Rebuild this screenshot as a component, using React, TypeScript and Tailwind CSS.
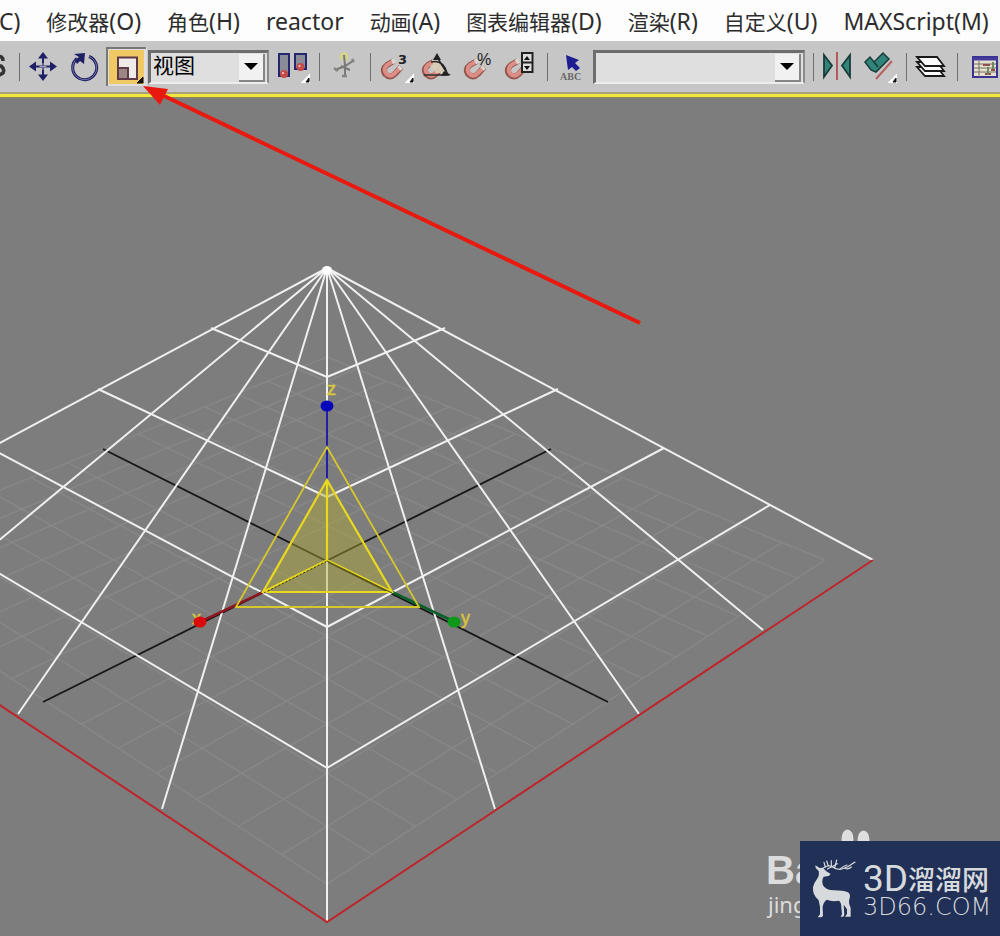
import type { ReactNode } from "react";

const NAVY = "#1f1f66";

/* Perspective projection of a ground-plane point, u and v in -1..1 */
function project(u: number, v: number): [number, number] {
  const depth = (u + v) / 2;
  const side = (u - v) / 2;
  const w = 1 - 0.2296 * depth;
  return [327 + (498 * side) / w, (560 + 121 * depth) / w];
}

function segment(a: [number, number], b: [number, number]) {
  return `M${a[0].toFixed(1)} ${a[1].toFixed(1)}L${b[0].toFixed(1)} ${b[1].toFixed(1)}`;
}

const STEPS = [-7, -6, -5, -4, -3, -2, -1, 1, 2, 3, 4, 5, 6, 7].map((n) => n / 7);
const groundGrid = STEPS.map(
  (k) => segment(project(k, -1), project(k, 1)) + segment(project(-1, k), project(1, k)),
).join("");

const RIM = [
  [873, 560], [763, 630], [639, 714], [495, 809], [327, 922],
  [162, 809], [18, 714], [-109, 630], [-219, 560],
];
const spokes = RIM.map(([x, y]) => `M327 268L${x} ${y}`).join("");
const rings =
  "M445 328L327 377L211 328M558 389L327 497L98 389M664 448L327 627L-10 448M770 505L327 768L-116 505";

function Tool({ name, x, active, children }: { name: string; x: number; active?: boolean; children: ReactNode }) {
  return (
    <button type="button" aria-label={name} aria-pressed={active} className="block h-[51px] w-[42px] shrink-0">
      <svg viewBox={`${x} 41 42 51`} className="block h-[51px] w-[42px]" fill="none">
        {children}
      </svg>
    </button>
  );
}

function Divider() {
  return <div className="mr-0.5 ml-1.5 h-7 w-px shrink-0 bg-[#6f6f6f]" />;
}

function Flyout({ x, y }: { x: number; y: number }) {
  return (
    <>
      <path d={`M${x - 6} ${y}L${x} ${y - 6}V${y}Z`} fill="#fff" stroke="#fff" strokeWidth="2" />
      <path d={`M${x - 3} ${y}L${x} ${y - 4}V${y}Z`} fill="#111" stroke="#111" />
    </>
  );
}

function Magnet({ x }: { x: number }) {
  return (
    <g transform={`translate(${x} 0)`}>
      <path d="M14 61L7 65Q2 69 5 74Q10 79 15 74L21 67" stroke="#93564f" strokeWidth="6" />
      <path d="M13 61.500L7 65Q3 69 6 73.500Q10 77.500 14 74L20 68" stroke="#dc8d85" strokeWidth="4" />
      <path d="M12 62L15 60.500M19 69L21 67" stroke="#d9d5d0" strokeWidth="5" />
    </g>
  );
}

function DropDown({ label, options, width }: { label: string; options: string[]; width: string }) {
  return (
    <div className={`relative h-[34px] shrink-0 ${width}`}>
      <select
        aria-label={label}
        className="block h-full w-full appearance-none border-t-[3px] border-r-2 border-b-2 border-l-[3px] border-t-[#6d6d6d] border-r-[#8b8b8b] border-b-[#ededed] border-l-[#6d6d6d] bg-[#dfdfdf] pb-1.5 pl-0.5 font-['Noto_Sans_CJK_SC',sans-serif] text-[21px] leading-[23px] text-black outline-none"
      >
        {options.map((o) => (
          <option key={o}>{o}</option>
        ))}
      </select>
      <span className="pointer-events-none absolute top-1 right-1 flex h-7 w-[26px] items-center justify-center border-r-2 border-b-2 border-[#858585] bg-[#f1f1f1]">
        <svg viewBox="0 0 14 7" className="h-[7px] w-[14px]">
          <path d="M0 0H14L7 7Z" fill="#000" />
        </svg>
      </span>
    </div>
  );
}

const MENUS: [string, string][] = [
  ["", "(C)"],
  ["修改器", "(O)"],
  ["角色", "(H)"],
  ["", "reactor"],
  ["动画", "(A)"],
  ["图表编辑器", "(D)"],
  ["渲染", "(R)"],
  ["自定义", "(U)"],
  ["", "MAXScript(M)"],
];

function MenuBar() {
  return (
    <nav className="flex h-[41px] items-center gap-[26px] overflow-hidden bg-[#fdfdfd]">
      {MENUS.map(([cjk, latin], i) => (
        <button
          key={latin}
          type="button"
          className={`flex shrink-0 items-center leading-7 whitespace-nowrap text-[#2c2c2c] ${i === 0 ? "-ml-2" : ""}`}
        >
          {cjk && <span className="font-['Noto_Sans_CJK_SC',sans-serif] text-[21px]">{cjk}</span>}
          <span className="font-['Noto_Sans',sans-serif] text-[23px]">{latin}</span>
        </button>
      ))}
    </nav>
  );
}

function Toolbar() {
  return (
    <div className="flex h-[51px] items-center overflow-hidden bg-[#c6c6c6]">
      <button type="button" aria-label="绑定" className="h-[51px] w-[13px] shrink-0">
        <svg viewBox="0 41 13 51" className="block h-[51px] w-[13px]" fill="none">
          <path d="M-3 57Q3 55 3 61M-2 66H1Q5 69 3 73L-2 76" stroke="#333" strokeWidth="3.500" />
        </svg>
      </button>
      <Divider />
      <Tool name="移动" x={22}>
        <path d="M43 56V77M32 66.500H54" stroke={NAVY} strokeWidth="2" />
        <path d="M43 52L38 58.500H48ZM43 81L38 74.500H48ZM29 66.500L36 61.500V71.500ZM57 66.500L50 61.500V71.500Z" fill={NAVY} />
        <path d="M43 63V70M39.500 66.500H46.500" stroke="#a5a5b8" strokeWidth="1" />
      </Tool>
      <Tool name="旋转" x={64}>
        <path d="M89 56.500A12 12 0 1 1 77 58.500" stroke={NAVY} strokeWidth="3" />
        <path d="M89 56.500A12 12 0 1 1 77 58.500" stroke="#8c8cad" strokeWidth="0.800" />
        <path d="M74 54L85 53L84 64L80 61L77 64L75 60L79 57Z" fill={NAVY} />
      </Tool>
      <Tool name="缩放" x={106} active>
        <path d="M106 47H147V86H106Z" fill="#dedede" />
        <path d="M107 86V48H146" stroke="#777" strokeWidth="2" />
        <path d="M109 50H144V84H109Z" fill="#f0c964" />
        <path d="M118 57.500H137V79H118Z" fill="#efebe8" stroke="#5e3946" strokeWidth="2" />
        <path d="M118 68H128V79H118Z" fill="#9c8585" stroke="#5e3946" strokeWidth="2" />
        <path d="M137 83L143 77V83Z" fill="#111" stroke="#111" />
      </Tool>
      <DropDown label="参考坐标系" options={["视图", "屏幕", "世界"]} width="w-[121px]" />
      <div className="w-0.5 shrink-0" />
      <Tool name="使用轴点中心" x={271}>
        <path d="M279 54H289V76H279ZM295 54H306V69H295Z" fill="#8a8d98" stroke="#252570" strokeWidth="2" />
        <circle cx="284" cy="74" r="4" fill="#c44a48" />
        <circle cx="300.500" cy="67" r="4" fill="#c44a48" />
        <circle cx="283" cy="73" r="1.200" fill="#eab0aa" />
        <circle cx="299.500" cy="66" r="1.200" fill="#eab0aa" />
        <Flyout x={309} y={82} />
      </Tool>
      <Divider />
      <Tool name="选择并操纵" x={322}>
        <circle cx="344" cy="56.500" r="4.500" fill="#d3d492" />
        <path d="M335 70L345 66L353 61M344 55L345 66V76M341 66L350 70" stroke="#777a76" strokeWidth="2" />
        <path d="M334 68L338 71M352 59L354 62M342 76H347" stroke="#85857f" strokeWidth="2.500" />
      </Tool>
      <Divider />
      <Tool name="三维捕捉" x={373}>
        <Magnet x={380} />
        <text x="398" y="64" fontSize="13" fontWeight="700" fill="#222" fontFamily="DejaVu Sans, sans-serif">3</text>
        <Flyout x={413} y={82} />
      </Tool>
      <Tool name="角度捕捉" x={415}>
        <Magnet x={421} />
        <path d="M437 57L448 75H424" stroke="#2c2c2c" strokeWidth="1.500" />
        <path d="M437 60L446 73H436L430 66Z" fill="#d8cdb7" fillOpacity="0.900" />
        <path d="M433 60L437 53L441 60ZM444 71L451 75L441 76Z" fill="#222" />
        <path d="M431 62Q443 59 447 73" stroke="#222" strokeWidth="1.500" />
      </Tool>
      <Tool name="百分比捕捉" x={457}>
        <Magnet x={463} />
        <text x="477" y="65" fontSize="16" fill="#222" fontFamily="Liberation Sans, sans-serif">%</text>
      </Tool>
      <Tool name="微调器捕捉" x={499}>
        <Magnet x={504} />
        <path d="M522 53H532.500V72H522ZM522 62.500H532" fill="#ddd" stroke="#222" strokeWidth="2" />
        <path d="M524 60L527 56L530 60ZM524 66H530L527 70Z" fill="#111" />
      </Tool>
      <Divider />
      <Tool name="命名选择集" x={550}>
        <path d="M566 55L579 60L575 63L580 68L576 71L572 67L568 70Z" fill="#1d1d91" />
        <text x="560" y="80" fontSize="10" fontWeight="700" fill="#686868" fontFamily="Liberation Serif, serif">ABC</text>
      </Tool>
      <div className="w-px shrink-0" />
      <DropDown label="选择集" options={[""]} width="w-[212px]" />
      <div className="w-0.5 shrink-0" />
      <Divider />
      <Tool name="镜像" x={816}>
        <path d="M824 55L832 65.500L824 77ZM850 55L842 65.500L850 77Z" fill="#338579" stroke="#183c3a" strokeWidth="1.800" />
        <path d="M837 52V80" stroke="#b05a5a" strokeWidth="2" />
      </Tool>
      <Tool name="对齐" x={858}>
        <path d="M865 62L870 57L874 62L883 53L889 59L876 72L871 70Z" fill="#32837a" stroke="#183c3a" strokeWidth="1.500" />
        <path d="M874 62L878 67" stroke="#183c3a" strokeWidth="1.500" />
        <path d="M876 79L892 61" stroke="#b76060" strokeWidth="2" />
        <Flyout x={896} y={82} />
      </Tool>
      <Divider />
      <Tool name="层管理器" x={909}>
        {[10, 5, 0].map((dy) => (
          <path key={dy} d={`M917 ${57 + dy}H937L944 ${66 + dy}H925Z`} fill="#fafafa" stroke="#191919" strokeWidth="1.800" />
        ))}
      </Tool>
      <Divider />
      <Tool name="曲线编辑器" x={960}>
        <path d="M973 57H997V77H973Z" fill="#e6e0cf" stroke="#3a3193" strokeWidth="2" />
        <path d="M973 59H998" stroke="#453b9c" strokeWidth="3" />
        <path d="M974 64H996M974 68H996M974 72H996M979 61V77" stroke="#777064" />
        <path d="M983 65H990M991 70H995M985 74H991" stroke="#924f4b" strokeWidth="2" />
        <path d="M988 67V75M993 62V69" stroke="#6c8a62" strokeWidth="2" />
      </Tool>
    </div>
  );
}

function Scene() {
  return (
    <svg viewBox="0 98 1000 838" className="block w-full" fill="none" role="img" aria-label="透视视口">
      <path d={groundGrid} stroke="#878787" strokeWidth="1.500" />
      <path d="M103 449L608 702M551 449L43 702" stroke="#161616" strokeWidth="1.800" />
      <path d={spokes + rings} stroke="#f0f0f0" strokeWidth="2" strokeLinejoin="round" />
      <ellipse cx="327" cy="270" rx="5" ry="4" fill="#fff" />
      <path d="M873 560L327 922L-219 560" stroke="#bd252b" strokeWidth="2" />
      <path d="M327 480L392 592H263Z" fill="#b3a936" fillOpacity="0.460" />
      <path d="M327 406V480" stroke="#2020a5" strokeWidth="2" />
      <path d="M263 592L200 622" stroke="#8d1720" strokeWidth="2.500" />
      <path d="M392 592L455 622" stroke="#0c602a" strokeWidth="3" />
      <path d="M327 447L419 607H236Z" stroke="#d6c72b" strokeWidth="1.800" />
      <path d="M327 480L392 592H263ZM327 480V560" stroke="#e8d81f" strokeWidth="2.200" />
      <path d="M263 592L327 560L392 592" stroke="#e8d81f" strokeWidth="2" />
      <path d="M264 593L327 561" stroke="#3a3716" strokeDasharray="2 2" />
      <path d="M327 561L392 593" stroke="#4b4715" />
      <ellipse cx="327" cy="406" rx="6.500" ry="5.500" fill="#0606bd" />
      <g fill="#d8c63b" stroke="#d8c63b" strokeWidth="0.500" fontFamily="Liberation Sans, sans-serif" fontSize="18">
        <text x="327" y="395">z</text>
        <text x="192" y="624">x</text>
        <text x="461" y="624">y</text>
      </g>
      <ellipse cx="200" cy="622" rx="6.500" ry="5.500" fill="#dc0b0b" />
      <ellipse cx="454" cy="622" rx="6.500" ry="5.500" fill="#0e9819" />
    </svg>
  );
}

function Deer() {
  return (
    <svg viewBox="180 123 186 285" className="h-[95px] w-[62px] shrink-0" fill="none">
      <path
        d="M226 196L239 204L249 203L258 213L272 222L266 228L251 230Q244 242 249 256Q257 271 282 271Q310 271 322 276Q333 281 329 295Q324 306 332 324V350H315L321 342V328L311 314L313 344L310 350H302L306 342L303 312Q301 304 297 302Q276 306 260 299Q248 309 248 323L249 348L244 352H233L240 343V321L236 301Q217 285 219 262Q222 248 231 237Q239 227 236 213L227 204Z"
        fill="#d7dadd"
      />
      <path
        d="M248 205Q258 196 272 198Q290 211 306 207Q327 200 345 186M256 202L252 187M265 198L260 183M274 199L274 182M284 204L290 180M298 208Q310 198 321 195M314 205Q324 210 334 201M262 207Q278 199 292 191"
        stroke="#d7dadd"
        strokeWidth="3.500"
        strokeLinecap="round"
      />
    </svg>
  );
}

function Watermark() {
  return (
    <div className="absolute right-0 bottom-0 h-[108px] w-[236px] overflow-hidden text-[#dcdcdc]">
      <svg viewBox="0 0 40 20" className="absolute top-0 left-[76px] h-5 w-10">
        <ellipse cx="7.500" cy="11" rx="6" ry="9.500" fill="#dedede" />
        <ellipse cx="23.500" cy="12" rx="6" ry="9.500" fill="#dedede" />
      </svg>
      <div className="pt-[22px] pl-0.5 font-['Liberation_Sans',sans-serif] text-[40px] leading-10 font-bold">Bai</div>
      <div className="pl-1 font-['Noto_Sans',sans-serif] text-[22px] leading-7">jing</div>
      <div className="absolute right-0 bottom-0 flex h-[95px] w-[200px] bg-[#213056] text-[#d7dadd]">
        <Deer />
        <div className="pt-5 pl-px whitespace-nowrap">
          <div className="flex h-9 items-center">
            <span className="font-['Roboto',sans-serif] text-[37px] leading-9">3D</span>
            <span className="font-['Noto_Sans_CJK_SC',sans-serif] text-[27px] leading-8 font-medium">溜溜网</span>
          </div>
          <div className="font-['DejaVu_Sans',sans-serif] text-[24px] leading-5 font-extralight">3D66.COM</div>
        </div>
      </div>
    </div>
  );
}

export default function App() {
  return (
    <div className="relative min-h-screen overflow-hidden bg-[#7d7d7d]">
      <MenuBar />
      <Toolbar />
      <div className="h-1.5 border-t-2 border-b border-t-[#a6a27c] border-b-[#8c8950] bg-[#f3e640]" />
      <main className="relative">
        <Scene />
        <Watermark />
      </main>
      <svg viewBox="0 0 1000 936" className="pointer-events-none absolute top-0 left-0 w-full" fill="none">
        <path d="M160 94L640 323" stroke="#e8190f" strokeWidth="4" />
        <path d="M143 86L168 89L160 105Z" fill="#e8190f" />
      </svg>
    </div>
  );
}
